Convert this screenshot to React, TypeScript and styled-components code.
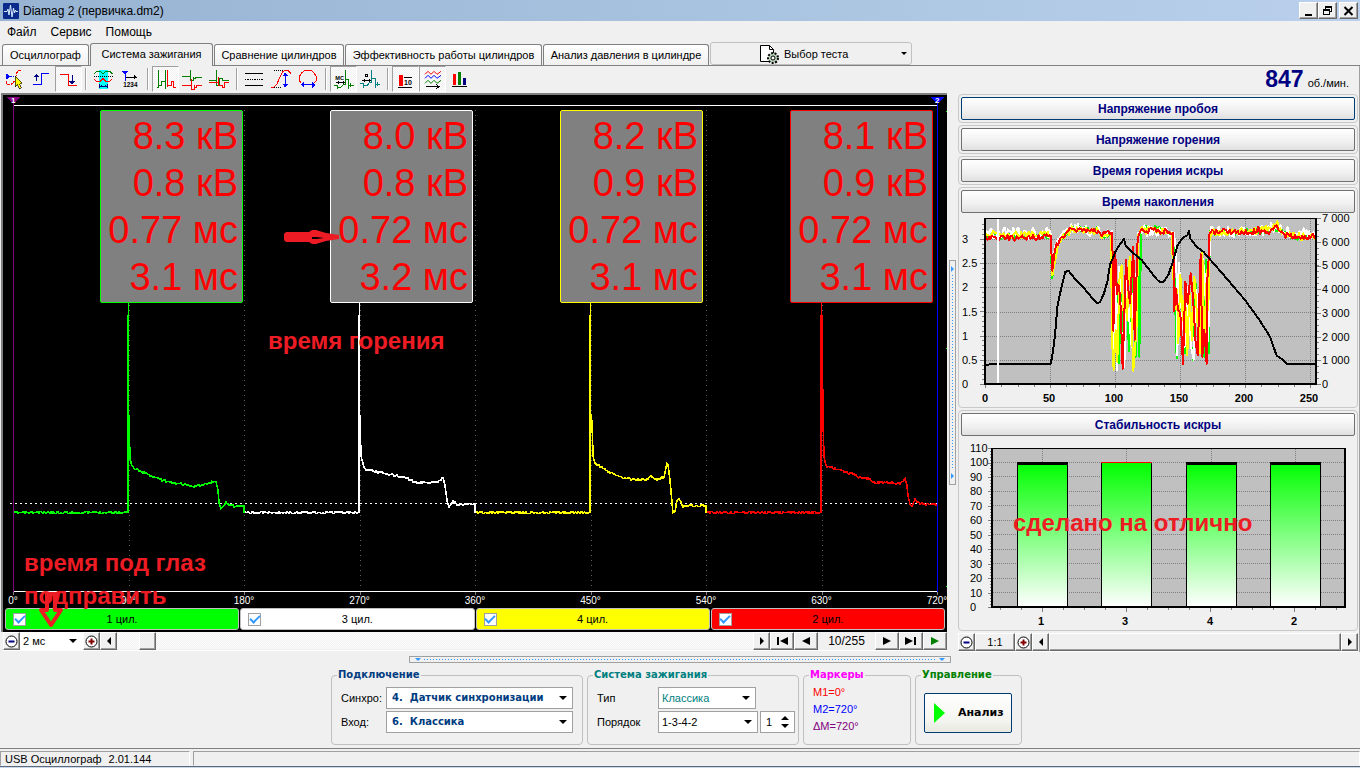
import React from "react";
import styled, { createGlobalStyle, css } from "styled-components";

const GlobalStyle = createGlobalStyle`
  * { box-sizing: border-box; }
  body {
    margin: 0;
    background: #f0f0f0;
    color: #000;
    font: 11px/14px "Liberation Sans", Arial, sans-serif;
  }
  button, select, input {
    font: inherit;
    color: inherit;
    margin: 0;
    padding: 0;
    border-radius: 0;
  }
  svg { display: block; }
`;

const wide = css`
  font-family: "DejaVu Sans", Verdana, sans-serif;
  font-size: 10px;
  font-weight: bold;
`;

/* ---------- window frame ---------- */

const Window = styled.div`
  display: flex;
  flex-direction: column;
  min-height: 100vh;
`;

const TitleBar = styled.header`
  display: flex;
  align-items: center;
  gap: 4px;
  height: 21px;
  padding: 0 2px 0 3px;
  background: linear-gradient(90deg, #97b3d3, #a9c4e0 55%, #bad0ec);
`;

const Title = styled.h1`
  flex: 1;
  margin: 0;
  font-size: 12px;
  font-weight: normal;
`;

const WindowButtons = styled.div`
  display: flex;
`;

const WindowButton = styled.button<{ $apart?: boolean }>`
  display: grid;
  place-items: center;
  width: 19px;
  height: 17px;
  margin-left: ${(p) => (p.$apart ? 2 : 0)}px;
  background: #f0f0f0;
  border: 1px solid;
  border-color: #fff #696969 #696969 #fff;
  box-shadow: inset -1px -1px #a0a0a0;
`;

const MenuBar = styled.nav`
  display: flex;
  gap: 14px;
  height: 21px;
  padding: 0 7px;
  align-items: center;
  font-size: 12px;
`;

const MenuItem = styled.a`
  color: inherit;
  text-decoration: none;
`;

const TabBar = styled.div`
  display: flex;
  align-items: flex-end;
  height: 24px;
  padding-left: 2px;
  border-bottom: 1px solid #808080;
`;

const Tab = styled.button<{ $active?: boolean; $width: number }>`
  width: ${(p) => p.$width}px;
  height: ${(p) => (p.$active ? 23 : 21)}px;
  margin: 0 1px ${(p) => (p.$active ? -1 : 0)}px 0;
  padding-bottom: ${(p) => (p.$active ? 2 : 0)}px;
  border: 1px solid #808080;
  border-bottom: 0;
  border-radius: 3px 3px 0 0;
  background: ${(p) => (p.$active ? "#f0f0f0" : "linear-gradient(#fff, #f0f0f0)")};
  white-space: nowrap;
`;

const TestPicker = styled.button`
  display: flex;
  align-items: center;
  align-self: flex-start;
  gap: 5px;
  width: 202px;
  height: 23px;
  padding: 0 4px 0 48px;
  border: 1px solid #c0c0c0;
  border-radius: 3px;
  background: #f0f0f0;
  text-align: left;
  span { flex: 1; }
`;

const Workspace = styled.main`
  display: grid;
  grid-template-columns: minmax(0, 1fr) 10px 403px;
`;

const ScopeColumn = styled.section`
  display: flex;
  flex-direction: column;
  padding-left: 1px;
`;

/* ---------- toolbar ---------- */

const Toolbar = styled.div`
  display: flex;
  height: 27px;
`;

const ToolButton = styled.button<{ $pressed?: boolean }>`
  display: grid;
  place-items: start;
  width: 27px;
  height: 26px;
  border: 1px solid transparent;
  background: none;
  ${(p) =>
    p.$pressed &&
    css`
      border-color: #a0a0a0 #fff #fff #a0a0a0;
      background: repeating-conic-gradient(#fff 0 25%, #f0f0f0 0 50%) 0 0 / 2px 2px;
    `}
  svg { margin: -1px; }
`;

const ToolDivider = styled.span`
  width: 2px;
  height: 22px;
  margin: 2px 3px;
  border-left: 1px solid #a0a0a0;
  border-right: 1px solid #fff;
`;

/* ---------- oscilloscope ---------- */

const Scope = styled.div`
  position: relative;
  border-left: 2px solid #808080;
  border-top: 2px solid #808080;
  background: #000;
`;

const ScopePlot = styled.svg`
  width: 100%;
  height: 500px;
`;

const Readouts = styled.div`
  position: absolute;
  inset: 15px 14px auto 10px;
  display: grid;
  grid-template-columns: repeat(4, 1fr);
  justify-items: end;
`;

const Readout = styled.div<{ $color: string }>`
  width: 143px;
  padding: 2px 4px 1px;
  border: 1px solid ${(p) => p.$color};
  border-radius: 2px;
  background: #808080;
  color: #f00;
  font-size: 38px;
  line-height: 47px;
  text-align: right;
  white-space: nowrap;
  div { display: flex; justify-content: flex-end; }
`;

const DegreeAxis = styled.div`
  display: flex;
  justify-content: space-between;
  height: 12px;
  padding: 0 10px;
  color: #fff;
  font-size: 10px;
  line-height: 12px;
  span {
    display: flex;
    justify-content: center;
    width: 0;
    white-space: nowrap;
  }
`;

const Cylinders = styled.div`
  display: grid;
  grid-template-columns: repeat(4, 1fr);
  gap: 1px;
  padding: 1px 2px 2px;
`;

const Cylinder = styled.label<{ $color: string }>`
  display: grid;
  grid-template-columns: 14px 1fr 14px;
  align-items: center;
  height: 22px;
  padding: 0 7px;
  border: 1px solid #c0c0c0;
  border-radius: 3px;
  background: ${(p) => p.$color};
  text-align: center;
`;

const Check = styled.input`
  appearance: none;
  display: grid;
  place-items: center;
  width: 13px;
  height: 13px;
  border: 1px solid #a0a0a0;
  background: #fff;
  &:checked::after {
    content: "";
    width: 8px;
    height: 4px;
    margin-bottom: 2px;
    border: solid #3399ff;
    border-width: 0 0 2px 2px;
    transform: rotate(-45deg);
  }
`;

const Note = styled.p<{ $x: number; $y: number }>`
  position: absolute;
  left: ${(p) => p.$x}px;
  top: ${(p) => p.$y}px;
  margin: 0;
  color: #ed1c24;
  font-size: 24px;
  font-weight: bold;
  line-height: 33px;
  white-space: pre-line;
`;

const Mark = styled.svg<{ $x: number; $y: number }>`
  position: absolute;
  left: ${(p) => p.$x}px;
  top: ${(p) => p.$y}px;
`;

/* ---------- scroll and page controls ---------- */

const ControlRow = styled.div<{ $inset?: boolean }>`
  display: flex;
  height: 19px;
  padding-bottom: 1px;
  margin-left: ${(p) => (p.$inset ? 2 : 0)}px;
  border-bottom: 1px solid #fff;
`;

const Key = styled.button<{ $width: number }>`
  display: grid;
  place-items: center;
  flex: none;
  width: ${(p) => p.$width}px;
  height: 18px;
  border: 1px solid;
  border-color: #fff #696969 #696969 #fff;
  box-shadow: inset -1px -1px #a0a0a0;
  background: #f0f0f0;
`;

const Track = styled.div`
  flex: 1;
  padding-left: 22px;
  background: repeating-conic-gradient(#fff 0 25%, #f0f0f0 0 50%) 0 0 / 2px 2px;
`;

const WideThumb = styled(Key)`
  flex: 1;
`;

const PageNumber = styled.output`
  width: 57px;
  line-height: 18px;
  text-align: center;
  font-size: 12px;
`;

/* ---------- splitters ---------- */

const SideSplitter = styled.div`
  display: flex;
  flex-direction: column;
  justify-content: space-between;
  align-items: center;
  align-self: start;
  width: 7px;
  height: 225px;
  margin: 194px 0 0 2px;
  padding: 5px 0;
  border: 1px solid #a0a0a0;
`;

const BottomSplitter = styled.div`
  display: flex;
  align-items: center;
  justify-content: space-between;
  width: 542px;
  height: 7px;
  margin: 4px auto 5px;
  padding: 0 5px;
  border: 1px solid #a0a0a0;
`;

const Dots = styled.span<{ $vertical?: boolean }>`
  flex: 1;
  ${(p) =>
    p.$vertical
      ? css`
          width: 1px;
          margin: 3px 0;
          background: repeating-linear-gradient(#3399ff 0 1px, transparent 1px 3px);
        `
      : css`
          height: 1px;
          margin: 0 3px;
          background: repeating-linear-gradient(90deg, #3399ff 0 1px, transparent 1px 3px);
        `}
`;

/* ---------- right side ---------- */

const SideColumn = styled.aside`
  display: flex;
  flex-direction: column;
  gap: 2px;
  padding: 0 1px;
  border-right: 1px solid #a0a0a0;
`;

const Speed = styled.div`
  display: flex;
  justify-content: flex-end;
  align-items: baseline;
  gap: 4px;
  height: 26px;
  padding-right: 9px;
  line-height: 27px;
  strong {
    color: #000080;
    font-size: 23px;
  }
`;

const Group = styled.section`
  position: relative;
  padding: 2px;
  border: 1px solid #c8c8c8;
  border-radius: 4px;
`;

const GroupButton = styled.button<{ $focused?: boolean }>`
  display: block;
  width: 100%;
  height: 23px;
  border: 1px solid ${(p) => (p.$focused ? "#003c74" : "#707070")};
  border-radius: 2px;
  background: linear-gradient(#fff, #f0f0f0 60%, #e0e0e0);
  color: #000080;
  font-size: 12px;
  font-weight: bold;
`;

const Chart = styled.svg`
  width: 100%;
  font-size: 11px;
`;

/* ---------- bottom panel ---------- */

const SettingsRow = styled.div`
  display: flex;
  justify-content: center;
  align-items: stretch;
  gap: 4px;
  height: 77px;
  margin: 0 7px 3px 0;
`;

const Fieldset = styled.fieldset<{ $color: string; $width: number; $tight?: boolean }>`
  width: ${(p) => p.$width}px;
  margin: 0;
  padding: 5px ${(p) => (p.$tight ? 3 : 9)}px 0 9px;
  border: 1px solid #c0c0c0;
  border-radius: 4px;
  legend {
    ${wide}
    margin-left: -4px;
    padding: 0 1px;
    color: ${(p) => p.$color};
    line-height: 14px;
  }
`;

const Fields = styled.div<{ $label: number }>`
  display: grid;
  grid-template-columns: ${(p) => p.$label}px 1fr;
  row-gap: 2px;
  align-items: center;
`;

const Inline = styled.div`
  display: flex;
  gap: 2px;
`;

const SelectBox = styled.div<{ $width?: number; $plain?: boolean }>`
  position: relative;
  width: ${(p) => (p.$width ? `${p.$width}px` : "100%")};
  svg {
    position: absolute;
    right: 6px;
    top: calc(50% - 2px);
    pointer-events: none;
  }
  select {
    appearance: none;
    display: block;
    width: 100%;
    height: ${(p) => (p.$plain ? 18 : 22)}px;
    padding: 0 3px;
    border: ${(p) => (p.$plain ? 0 : 1)}px solid #a0a0a0;
    background: #fff;
  }
`;

const BoldSelect = styled.select`
  ${wide}
  color: #003c80;
  && { padding-left: 5px; }
`;

const TealSelect = styled.select`
  color: #008080;
`;

const Spinner = styled.div`
  display: flex;
  align-items: center;
  width: 35px;
  height: 22px;
  padding: 0 5px;
  border: 1px solid #a0a0a0;
  background: #fff;
  input {
    flex: 1;
    width: 0;
    min-width: 0;
    border: 0;
    background: none;
  }
`;

const SpinKeys = styled.div`
  display: grid;
  gap: 4px;
  button {
    border: 0;
    background: none;
    line-height: 0;
  }
`;

const Markers = styled.div`
  margin-top: -3px;
  line-height: 17px;
`;

const Marker = styled.div<{ $color: string }>`
  color: ${(p) => p.$color};
`;

const RunButton = styled.button`
  ${wide}
  display: flex;
  align-items: center;
  gap: 13px;
  width: 88px;
  height: 40px;
  margin: 6px 0 0 -1px;
  padding-left: 9px;
  border: 1px solid #003c74;
  border-radius: 2px;
  background: linear-gradient(#fff, #f4f4f0 70%, #e8e8e0);
  font-size: 11px;
`;

const StatusBar = styled.footer`
  display: flex;
  gap: 3px;
  padding-top: 2px;
  margin-top: auto;
  border-top: 1px solid #808080;
  border-bottom: 1px solid #5a6a80;
`;

const StatusCell = styled.div<{ $grow?: boolean }>`
  display: flex;
  gap: 7px;
  flex: ${(p) => (p.$grow ? "1" : "0 0 190px")};
  height: 15px;
  padding-left: 4px;
  border: 1px solid;
  border-color: #a0a0a0 #fff transparent #a0a0a0;
`;

const BottomEdge = styled.div`
  height: 1px;
  background: #cbd7e6;
`;

/* ---------- glyphs ---------- */

const Arrow = ({ dir, color = "#000", size = 4 }: { dir: "up" | "down" | "left" | "right"; color?: string; size?: number }) => {
  const s = size;
  const shapes = {
    up: `0,${s} ${2 * s},${s} ${s},0`,
    down: `0,0 ${2 * s},0 ${s},${s}`,
    left: `${s},0 ${s},${2 * s} 0,${s}`,
    right: `0,0 0,${2 * s} ${s},${s}`,
  };
  const flat = dir === "up" || dir === "down";
  return (
    <svg width={flat ? 2 * s : s} height={flat ? s : 2 * s} aria-hidden="true">
      <polygon points={shapes[dir]} fill={color} />
    </svg>
  );
};

const PageGlyph = ({ dir, end, color = "#000" }: { dir: 1 | -1; end?: boolean; color?: string }) => (
  <svg width="12" height="8" viewBox="0 0 12 8" aria-hidden="true">
    <g transform={dir < 0 ? "translate(12 0) scale(-1 1)" : undefined} fill={color}>
      <polygon points={end ? "0,0 8,4 0,8" : "2,0 10,4 2,8"} />
      {end && <rect x="9" width="2" height="8" />}
    </g>
  </svg>
);

const ZoomGlyph = ({ plus }: { plus?: boolean }) => (
  <svg width="13" height="13" viewBox="0 0 13 13" aria-hidden="true">
    <circle cx="6.5" cy="6.5" r="5.5" fill="#fff" stroke="#000" />
    <path d={plus ? "M3.5 6.5h6M6.5 3.5v6" : "M3.5 6.5h6"} stroke={plus ? "#800000" : "#000080"} strokeWidth="2" />
  </svg>
);

const toolGroups: { name: string; x: number; pressed?: boolean; art: React.ReactNode }[][] = [
  [
    {
      name: "Уровень",
      x: 3,
      art: (
        <>
          <polygon points="18,220 33,229.500 18,239" fill="#00f" stroke="none" />
          <path d="M33 230H52" stroke="#00f" strokeDasharray="3 3" />
          <path d="M63 211H57L51 217 48 227 45 237M18 242V248L24 254H33L39 248 43 243" stroke="red" strokeDasharray="9 2" />
          <polygon points="46,229 46,260 53,254 58,267 64,264 59,252 67,250" fill="#ff0" stroke="#000" strokeWidth="2" />
        </>
      ),
    },
    { name: "Фронт", x: 84, art: <><path d="M99 254H123V220H147" stroke="#00f" /><path d="M109 244V228" stroke="#000080" /><polygon points="100,232 109,221 118,232" fill="#000080" /></> },
    { name: "Спад", x: 165, pressed: true, art: <><path d="M180 224H206V257H232" stroke="red" /><path d="M216 225V246" stroke="#000080" /><polygon points="207,243 216,253 225,243" fill="#000080" /></> },
  ],
  [
    {
      name: "Окно",
      x: 270,
      art: (
        <>
          <rect x="296" y="210" width="28" height="57" fill="#0ff" />
          <path d="M282 222L290 213H300L309 221 318 213H328L337 222" stroke="green" />
          <path d="M281 230H338" stroke="#000" strokeDasharray="3 3" />
          <path d="M282 237L290 244H300L309 236 318 244H328L337 237" stroke="red" />
          <path d="M299 252V265M321 252V265M299 259H321M303 255V262M317 255V262" stroke="#000080" />
        </>
      ),
    },
    {
      name: "Порядок цилиндров",
      x: 351,
      art: (
        <>
          <polygon points="366,213 386,213 376,224" fill="#00f" />
          <path d="M376 222V242" stroke="#00f" />
          <path d="M378 232H408" stroke="#000" />
          <polygon points="402,225 411,232 402,239" fill="#000" />
          <text x="370" y="262" fontSize="19" fontWeight="bold" fill="#000">1234</text>
        </>
      ),
    },
  ],
  [
    { name: "Последовательно", x: 456, pressed: true, art: <><path d="M470 262H475V211M475 256H484V244H497M497 211V268" stroke="green" /><path d="M503 211V262M503 256H513V244H520V262H527" stroke="red" /></> },
    { name: "Друг под другом", x: 537, art: <><path d="M546 229H570V209V240H579V231M579 235H587V231H606" stroke="green" /><path d="M546 256H573V238V267H582V256M582 262H588V256H606" stroke="red" /></> },
    { name: "Наложение", x: 618, art: <><path d="M627 242H650V209V256H659V236H668V242H687" stroke="green" /><path d="M627 248H654V232V256H668V262H674V248H686" stroke="red" /></> },
  ],
  [
    { name: "Линии", x: 723, art: <><path d="M735 220H789M735 256H789" stroke="#000" /><path d="M735 238H789" stroke="#000" strokeDasharray="4 3" /></> },
    {
      name: "Высота",
      x: 804,
      art: (
        <>
          <path d="M822 211H850M822 263H847" stroke="#000" strokeDasharray="3 3" />
          <path d="M813 261H822L831 252 840 230 849 214 855 211H864L873 220" stroke="red" />
          <path d="M856 222V256" stroke="#00f" />
          <polygon points="847,228 856,217 865,228" fill="#00f" />
          <polygon points="847,252 856,263 865,252" fill="#00f" />
        </>
      ),
    },
    {
      name: "Ширина",
      x: 885,
      art: (
        <>
          <path d="M904 248L898 242V230L904 220 913 212H934L943 220 949 230V242L943 248" stroke="red" />
          <path d="M908 254H940" stroke="#00f" />
          <polygon points="913,244 902,254 913,264" fill="#00f" />
          <polygon points="936,244 947,254 936,264" fill="#00f" />
        </>
      ),
    },
  ],
  [
    {
      name: "Миллисекунды",
      x: 990,
      pressed: true,
      art: (
        <>
          <text x="1006" y="241" fontSize="17" fontWeight="bold" fill="#000">МС</text>
          <path d="M1009 247H1034M1014 243V251M1029 243V251" stroke="#000" />
          <path d="M1003 256H1012V267M1012 262H1022L1030 254H1037V211M1037 238H1046V268M1046 256H1061M1052 250V262" stroke="green" />
        </>
      ),
    },
    {
      name: "Градусы",
      x: 1071,
      art: (
        <>
          <circle cx="1100" cy="227" r="4" stroke="#000" />
          <path d="M1087 241H1112M1092 237V245M1107 237V245" stroke="#000" />
          <path d="M1081 250H1090V264M1090 256H1102L1108 248H1115V211M1115 235H1125V265M1125 253H1139M1131 247V259" stroke="#008080" />
        </>
      ),
    },
  ],
  [
    { name: "Значения", x: 1176, pressed: true, art: <><rect x="1197" y="224" width="13" height="35" fill="red" /><path d="M1194 262H1237M1213 232H1235" stroke="#000" /><text x="1212" y="256" fontSize="21" fontWeight="bold" fill="#000">10</text></> },
    {
      name: "История",
      x: 1257,
      pressed: true,
      art: (
        <>
          <g strokeWidth="3" shapeRendering="auto">
            <path d="M1275 223L1284 214 1293 223 1302 214 1311 223 1323 214" stroke="red" />
            <path d="M1275 235L1284 226 1293 235 1302 226 1311 235 1323 226" stroke="#00f" />
            <path d="M1275 250L1284 241 1293 250 1302 241 1311 250 1323 241" stroke="green" />
          </g>
          <path d="M1278 260H1317M1309 254L1317 260 1309 266" stroke="#000" />
        </>
      ),
    },
    { name: "Гистограмма", x: 1338, art: <><rect x="1359" y="221" width="10" height="35" fill="red" /><rect x="1374" y="215" width="10" height="41" fill="green" /><rect x="1389" y="234" width="10" height="22" fill="#000080" /><path d="M1356 258H1401" stroke="#000" /></> },
  ],
];

/* ---------- signal data ---------- */

type Pt = [number, number];

const makeNoise = (seed: number) => {
  let s = seed;
  return () => {
    s = (s * 16807) % 2147483647;
    return s / 2147483647 - 0.5;
  };
};

/* Walks the polyline pixel by pixel and adds measurement noise. */
const trace = (pts: Pt[], amp: number, seed: number, step = 1) => {
  const noise = makeNoise(seed);
  const out: string[] = [];
  for (let i = 0; i < pts.length - 1; i++) {
    const [x0, y0] = pts[i];
    const [x1, y1] = pts[i + 1];
    const n = Math.max(1, Math.floor((x1 - x0) / step));
    for (let k = 0; k < n; k++) {
      const x = x0 + ((x1 - x0) * k) / n;
      const y = y0 + ((y1 - y0) * k) / n + (n > 2 ? noise() * amp : 0);
      out.push(`${x.toFixed(1)},${y.toFixed(1)}`);
    }
  }
  out.push(pts[pts.length - 1].join(","));
  return out.join(" ");
};

const cylinders = [
  {
    name: "1 цил.",
    color: "#00ff00",
    values: ["8.3 кВ", "0.8 кВ", "0.77 мс", "3.1 мс"],
    spark: 128,
    base: [[14, 512], [127, 512]] as Pt[],
    burn: [[128, 400], [129, 420], [130, 458], [132, 466], [135, 469], [142, 471], [150, 475], [160, 479], [172, 482], [185, 484], [194, 486], [205, 484], [214, 481], [216, 481], [218, 490], [219, 502], [221, 508], [223, 506], [226, 501], [229, 504], [235, 506], [244, 505], [244, 512]] as Pt[],
  },
  {
    name: "3 цил.",
    color: "#ffffff",
    values: ["8.0 кВ", "0.8 кВ", "0.72 мс", "3.2 мс"],
    spark: 359,
    base: [[245, 512], [358, 512]] as Pt[],
    burn: [[359, 400], [360, 420], [361, 455], [363, 464], [366, 469], [375, 471], [390, 474], [406, 477], [415, 482], [425, 482], [435, 482], [440, 480], [443, 477], [445, 485], [447, 500], [449, 506], [453, 501], [458, 504], [465, 504], [475, 504], [475, 512]] as Pt[],
  },
  {
    name: "4 цил.",
    color: "#ffff00",
    values: ["8.2 кВ", "0.9 кВ", "0.72 мс", "3.1 мс"],
    spark: 590,
    base: [[476, 512], [589, 512]] as Pt[],
    burn: [[590, 410], [592, 421], [593, 455], [594, 461], [600, 466], [610, 472], [622, 477], [635, 479], [648, 479], [651, 476], [656, 479], [664, 477], [667, 463], [668, 464], [670, 480], [672, 502], [673, 512], [675, 511], [677, 500], [679, 498], [683, 506], [690, 505], [706, 505], [706, 512]] as Pt[],
  },
  {
    name: "2 цил.",
    color: "#ff0000",
    values: ["8.1 кВ", "0.9 кВ", "0.72 мс", "3.1 мс"],
    spark: 821,
    base: [[707, 512], [820, 512]] as Pt[],
    burn: [[822, 315], [823, 420], [824, 456], [826, 466], [832, 467], [842, 470], [850, 473], [856, 474], [857, 477], [870, 478], [872, 482], [885, 482], [900, 483], [903, 481], [905, 478], [907, 485], [908, 495], [910, 504], [912, 506], [915, 499], [920, 503], [930, 504], [937, 504]] as Pt[],
  },
];

const lower = (pts: Pt[]) => pts.map(([x, y]) => [x, y + 0.5] as Pt);

const degrees = [0, 90, 180, 270, 360, 450, 540, 630, 720];

/* Accumulation time history: chart units are thirds of a pixel. */
const history = [
  {
    color: "#00ff00",
    seed: 71,
    amp: 18,
    pts: [[90, 78], [287, 78], [291, 206], [300, 150], [310, 92], [350, 54], [430, 60], [440, 78], [470, 70], [474, 300], [480, 170], [488, 250], [492, 460], [498, 240], [505, 430], [512, 180], [522, 425], [528, 290], [536, 160], [542, 440], [550, 75], [553, 440], [558, 80], [561, 54], [600, 54], [655, 70], [665, 445], [672, 190], [684, 300], [690, 430], [700, 240], [708, 400], [715, 450], [722, 220], [732, 410], [740, 180], [748, 440], [754, 150], [762, 430], [764, 70], [900, 64], [960, 56], [985, 72], [1020, 80], [1083, 82]] as Pt[],
  },
  {
    color: "#ffffff",
    seed: 19,
    amp: 34,
    pts: [[90, 70], [287, 70], [291, 170], [305, 100], [345, 58], [430, 64], [470, 62], [476, 420], [481, 180], [486, 480], [493, 170], [500, 380], [508, 470], [515, 200], [523, 330], [530, 410], [538, 180], [546, 300], [549, 70], [560, 60], [650, 66], [657, 70], [664, 135], [667, 435], [672, 160], [680, 300], [690, 410], [700, 230], [708, 410], [716, 450], [724, 240], [734, 430], [742, 140], [750, 200], [756, 420], [762, 330], [764, 66], [900, 66], [960, 52], [985, 66], [1083, 70]] as Pt[],
  },
  {
    color: "#ffff00",
    seed: 43,
    amp: 22,
    pts: [[90, 74], [287, 76], [292, 196], [303, 140], [312, 90], [350, 58], [430, 62], [440, 80], [468, 70], [471, 390], [476, 480], [482, 360], [487, 455], [493, 210], [500, 165], [504, 300], [510, 240], [516, 330], [524, 140], [530, 340], [535, 482], [540, 420], [546, 330], [549, 75], [560, 60], [650, 68], [659, 300], [666, 240], [670, 400], [676, 195], [684, 330], [690, 250], [697, 435], [703, 240], [711, 390], [718, 200], [727, 330], [734, 430], [742, 122], [748, 400], [756, 180], [760, 300], [764, 68], [900, 64], [960, 52], [967, 34], [972, 64], [1020, 78], [1083, 82]] as Pt[],
  },
  {
    color: "#ff0000",
    seed: 5,
    amp: 18,
    pts: [[90, 84], [210, 84], [287, 78], [292, 182], [299, 125], [305, 105], [325, 78], [345, 56], [430, 62], [436, 78], [455, 68], [472, 68], [475, 362], [481, 135], [486, 252], [491, 225], [496, 268], [503, 476], [513, 150], [519, 230], [525, 280], [535, 110], [539, 390], [548, 85], [553, 62], [600, 62], [655, 68], [657, 305], [663, 235], [669, 300], [676, 310], [684, 463], [691, 215], [698, 282], [707, 190], [714, 260], [722, 400], [728, 436], [737, 132], [742, 440], [748, 360], [755, 462], [757, 210], [762, 130], [763, 68], [800, 66], [860, 64], [905, 66], [910, 50], [915, 66], [950, 62], [965, 46], [975, 72], [1020, 82], [1083, 80]] as Pt[],
  },
];

const rpmPts: Pt[] = [[90, 464], [140, 462], [287, 462], [293, 430], [300, 375], [307, 290], [320, 228], [331, 186], [340, 182], [347, 190], [365, 213], [385, 232], [410, 262], [425, 279], [435, 277], [447, 250], [457, 215], [465, 165], [480, 128], [490, 110], [507, 87], [512, 108], [530, 125], [560, 150], [605, 208], [615, 216], [625, 216], [640, 195], [652, 160], [668, 105], [685, 82], [697, 76], [702, 63], [706, 86], [725, 110], [745, 125], [800, 188], [870, 270], [910, 325], [945, 380], [965, 437], [980, 447], [995, 462], [1082, 462]];

const range = (n: number) => Array.from({ length: n }, (_, i) => i);

const HistoryChart = () => (
  <Chart viewBox="961 213 394 192" role="img" aria-label="Время накопления">
    <rect x="985" y="219" width="331" height="165" fill="#c0c0c0" />
    <g stroke="#808080" shapeRendering="crispEdges">
      <g strokeDasharray="1 1">
        {range(6).map((i) => <path key={i} d={`M986 ${Math.round(360 - i * 24.2) + 0.5}H1315`} />)}
        {range(5).map((i) => <path key={i} d={`M${1050.5 + i * 65} 219V383`} />)}
      </g>
      {range(7).map((i) => <path key={i} d={`M980 ${Math.round(384 - i * 24.2) + 0.5}H985`} />)}
      {range(34).map((i) => <path key={i} d={`M982 ${Math.round(384 - i * 4.84) + 0.5}H985`} />)}
      {range(8).map((i) => <path key={i} d={`M1317 ${Math.round(384 - i * 23.7) + 0.5}H1321`} />)}
      {range(28).map((i) => <path key={i} d={`M1317 ${Math.round(384 - i * 5.93) + 0.5}H1319`} />)}
      {range(6).map((i) => <path key={i} d={`M${985.5 + i * 65} 385V388`} />)}
      {range(21).map((i) => <path key={i} d={`M${Math.round(985 + i * 16.25) + 0.5} 385V387`} />)}
    </g>
    <g transform="translate(955 210) scale(0.33333)" fill="none" strokeLinejoin="round" shapeRendering="crispEdges">
      {history.map((h) => (
        <polyline key={h.color} points={trace(h.pts, h.amp, h.seed, 4)} stroke={h.color} strokeWidth="6" />
      ))}
      <polyline points={rpmPts.map((p) => p.join(",")).join(" ")} stroke="#000" strokeWidth="6" />
    </g>
    <g shapeRendering="crispEdges" fill="none" stroke="#000">
      <path d="M998 219V384" stroke="#fff" strokeWidth="2" />
      <path d="M984 218.500H1317" />
      <path d="M985 218V384M984 384H1317M1316 218V385" strokeWidth="2" />
    </g>
    {["3", "2.5", "2", "1.5", "1", "0.5", "0"].map((t, i) => (
      <text key={t} x="962" y={243 + Math.round(i * 24.2)}>{t}</text>
    ))}
    {["7 000", "6 000", "5 000", "4 000", "3 000", "2 000", "1 000", "0"].map((t, i) => (
      <text key={t} x="1322" y={222 + Math.round(i * 23.7)}>{t}</text>
    ))}
    <g fontWeight="bold" textAnchor="middle">
      {range(6).map((i) => <text key={i} x={985 + i * 65 - (i ? 1 : 0)} y="402">{i * 50}</text>)}
    </g>
  </Chart>
);

const bars = [
  { label: "1", x: 1017 },
  { label: "3", x: 1101, best: true },
  { label: "4", x: 1186 },
  { label: "2", x: 1270 },
];

const StabilityChart = () => (
  <Chart viewBox="961 436 394 192" role="img" aria-label="Стабильность искры">
    <defs>
      <linearGradient id="bar" x1="0" y1="0" x2="0" y2="1">
        <stop offset="0" stopColor="#00ff00" />
        <stop offset="1" stopColor="#ffffff" />
      </linearGradient>
    </defs>
    <rect x="992" y="448" width="353" height="159" fill="#c0c0c0" />
    <g stroke="#808080" shapeRendering="crispEdges">
      <g strokeDasharray="1 1">
        {range(10).map((i) => <path key={i} d={`M993 ${Math.round(592 - i * 14.45) + 0.5}H1344`} />)}
        {bars.map((b) => <path key={b.label} d={`M${b.x + 25.5} 449V462`} />)}
      </g>
      {range(12).map((i) => <path key={i} d={`M988 ${Math.round(607 - i * 14.45) + 0.5}H992`} />)}
      {range(55).map((i) => <path key={i} d={`M990 ${Math.round(607 - i * 2.89) + 0.5}H992`} />)}
      {range(17).map((i) => <path key={i} d={`M${1000.5 + i * 21} 608V${i % 4 === 2 ? 612 : 610}`} />)}
    </g>
    <g shapeRendering="crispEdges">
      {bars.map((b) => (
        <React.Fragment key={b.label}>
          <rect x={b.x + 0.5} y="462.500" width="50" height="144" fill="url(#bar)" stroke="#000" />
          {b.best ? <rect x={b.x} y="462" width="51" height="1" fill="red" /> : <rect x={b.x} y="462" width="51" height="3" />}
        </React.Fragment>
      ))}
      <path d="M991 448.500H1346" stroke="#000" />
      <path d="M992 448V608M991 607H1346M1345 448V608" stroke="#000" strokeWidth="2" />
    </g>
    {range(12).map((i) => (
      <text key={i} x="970" y={452 + Math.round(i * 14.45)}>{110 - i * 10}</text>
    ))}
    <g fontWeight="bold" textAnchor="middle">
      {bars.map((b) => <text key={b.label} x={b.x + 24} y="625">{b.label}</text>)}
    </g>
  </Chart>
);

const DropArrow = () => <Arrow dir="down" size={4} />;

export default function App() {
  return (
    <Window>
      <GlobalStyle />
      <TitleBar>
        <svg width="16" height="16" viewBox="0 0 16 16" aria-hidden="true">
          <rect width="16" height="16" rx="1" fill="#0a2a8c" />
          <path d="M1 8.500H4L5 6 6 12 7.500 2 9 14 10.500 5 11.500 10 12.500 7 13 8.500H15" fill="none" stroke="#d8ecff" />
        </svg>
        <Title>Diamag 2 (первичка.dm2)</Title>
        <WindowButtons>
          <WindowButton aria-label="Свернуть">
            <svg width="11" height="11"><rect x="2" y="9" width="7" height="2" /></svg>
          </WindowButton>
          <WindowButton aria-label="Восстановить">
            <svg width="11" height="11" fill="none" stroke="#000" shapeRendering="crispEdges">
              <path d="M3.500 4V1.500H9.500V6.500H7M3 2H10M1.500 4.500H7.500V9.500H1.500ZM1 5.500H8" />
            </svg>
          </WindowButton>
          <WindowButton $apart aria-label="Закрыть">
            <svg width="11" height="11"><path d="M1.500 2L9.500 10M9.500 2L1.500 10" stroke="#000" strokeWidth="2" /></svg>
          </WindowButton>
        </WindowButtons>
      </TitleBar>

      <MenuBar>
        <MenuItem href="#file">Файл</MenuItem>
        <MenuItem href="#service">Сервис</MenuItem>
        <MenuItem href="#help">Помощь</MenuItem>
      </MenuBar>

      <TabBar>
        <Tab $width={87}>Осциллограф</Tab>
        <Tab $active $width={123}>Система зажигания</Tab>
        <Tab $width={130}>Сравнение цилиндров</Tab>
        <Tab $width={197}>Эффективность работы цилиндров</Tab>
        <Tab $width={166}>Анализ давления в цилиндре</Tab>
        <TestPicker>
          <svg width="20" height="20" viewBox="0 0 20 20" aria-hidden="true">
            <path d="M1.500 1.500H10.500L14.500 5.500V17.500H1.500Z" fill="#fff" stroke="#000" />
            <path d="M10.500 1.500V5.500H14.500" fill="none" stroke="#000" />
            <circle cx="14" cy="14" r="5" fill="#b8d0b8" stroke="#000" strokeWidth="2" strokeDasharray="2 1.500" />
            <circle cx="14" cy="14" r="2" fill="#fff" stroke="#000" />
          </svg>
          <span>Выбор теста</span>
          <Arrow dir="down" size={3} />
        </TestPicker>
      </TabBar>

      <Workspace>
        <ScopeColumn>
          <Toolbar>
            {toolGroups.map((group, g) => (
              <React.Fragment key={g}>
                {g > 0 && <ToolDivider />}
                {group.map((tool) => (
                  <ToolButton key={tool.name} $pressed={tool.pressed} aria-label={tool.name} aria-pressed={!!tool.pressed}>
                    <svg width="27" height="25" viewBox={`${tool.x} 198 81 75`} fill="none" strokeWidth="3" shapeRendering="crispEdges">
                      {tool.art}
                    </svg>
                  </ToolButton>
                ))}
              </React.Fragment>
            ))}
          </Toolbar>

          <Scope>
            <ScopePlot viewBox="3 95 944 500" preserveAspectRatio="none" role="img" aria-label="Осциллограмма" fill="none" shapeRendering="crispEdges">
              <path d="M13 105.500H937M13 591.500H937" stroke="#fff" />
              {range(7).map((i) => (
                <path key={i} d={`M${Math.round(128.7 + i * 115.5) + 0.5} 110V590`} stroke="#606060" strokeDasharray="1 4" />
              ))}
              {range(9).map((i) => <path key={i} d={`M${Math.round(13.200 + i * 115.500) + 0.5} 592V595`} stroke="#808080" />)}
              <path d="M10 503.500H937" stroke="#fff" strokeDasharray="2 3" />
              {cylinders.map((c, i) => (
                <g key={c.name} stroke={c.color} strokeWidth="1.600">
                  <polyline points={trace(lower(c.base), 2.2, 11 + i * 7)} />
                  <polyline points={trace(lower(c.burn), 2, 23 + i * 7)} />
                  <path d={`M${c.spark + 0.5} 300V316`} strokeWidth="1" />
                  <path d={`M${c.spark} 315V513`} strokeWidth="2" />
                </g>
              ))}
              <path d="M13.500 98V592" stroke="#800080" />
              <path d="M937.500 98V592" stroke="#00f" />
              <polygon points="6,97 21,97 13.500,104" fill="#800080" />
              <polygon points="930,97 945,97 937.500,104" fill="#00f" />
              <text x="11" y="103" fontSize="8" fontWeight="bold" fill="#fff">1</text>
              <text x="935" y="103" fontSize="8" fontWeight="bold" fill="#fff">2</text>
              <path d="M946 111.500H948M946 348.500H948M946 586.500H948" stroke="#0f0" />
            </ScopePlot>
            <Readouts>
              {cylinders.map((c) => (
                <Readout key={c.name} $color={c.color}>
                  {c.values.map((v) => <div key={v}>{v}</div>)}
                </Readout>
              ))}
            </Readouts>
            <DegreeAxis>
              {degrees.map((d) => <span key={d}>{d}°</span>)}
            </DegreeAxis>
            <Cylinders>
              {cylinders.map((c) => (
                <Cylinder key={c.name} $color={c.color}>
                  <Check type="checkbox" defaultChecked />
                  {c.name}
                </Cylinder>
              ))}
            </Cylinders>
            <Mark $x={281} $y={134} width="56" height="17" viewBox="0 0 56 17" aria-hidden="true">
              <path d="M2 3H25L28 1H32L42 4 55 6V10L42 12 32 15H28L25 13H2L0 11V5Z" fill="#ed1c24" />
              <path d="M28 8H33L40 9 33 10H28Z" fill="#000" />
            </Mark>
            <Note $x={265} $y={229}>время горения</Note>
            <Note $x={21} $y={451}>{"время под глаз\nподправить"}</Note>
            <Mark $x={34} $y={497} width="27" height="37" viewBox="0 0 27 37" aria-hidden="true">
              <path d="M10 1V18H4L14 33 24 18H18V1M8 2H20" fill="none" stroke="#ed1c24" strokeWidth="4" strokeLinejoin="round" />
            </Mark>
          </Scope>

          <ControlRow $inset>
            <Key $width={17} aria-label="Уменьшить"><ZoomGlyph /></Key>
            <SelectBox $plain $width={63}>
              <select aria-label="Развёртка"><option>2 мс</option></select>
              <DropArrow />
            </SelectBox>
            <Key $width={17} aria-label="Увеличить"><ZoomGlyph plus /></Key>
            <Key $width={17} aria-label="Влево"><Arrow dir="left" /></Key>
            <Track><Key $width={17} aria-label="Ползунок" /></Track>
            <Key $width={17} aria-label="Вправо"><Arrow dir="right" /></Key>
            <Key $width={24} aria-label="Первый"><PageGlyph dir={-1} end /></Key>
            <Key $width={24} aria-label="Предыдущий"><PageGlyph dir={-1} /></Key>
            <PageNumber>10/255</PageNumber>
            <Key $width={24} aria-label="Следующий"><PageGlyph dir={1} /></Key>
            <Key $width={24} aria-label="Последний"><PageGlyph dir={1} end /></Key>
            <Key $width={24} aria-label="Воспроизвести"><PageGlyph dir={1} color="#008000" /></Key>
          </ControlRow>
        </ScopeColumn>

        <SideSplitter>
          <Arrow dir="right" color="#3399ff" size={3} />
          <Dots $vertical />
          <Arrow dir="right" color="#3399ff" size={3} />
        </SideSplitter>

        <SideColumn>
          <Speed><strong>847</strong> об./мин.</Speed>
          <Group><GroupButton $focused>Напряжение пробоя</GroupButton></Group>
          <Group><GroupButton>Напряжение горения</GroupButton></Group>
          <Group><GroupButton>Время горения искры</GroupButton></Group>
          <Group>
            <GroupButton>Время накопления</GroupButton>
            <HistoryChart />
          </Group>
          <Group>
            <GroupButton>Стабильность искры</GroupButton>
            <StabilityChart />
            <Note $x={54} $y={95}>сделано на отлично</Note>
          </Group>
          <ControlRow>
            <Key $width={17} aria-label="Уменьшить масштаб"><ZoomGlyph /></Key>
            <Key $width={40}>1:1</Key>
            <Key $width={17} aria-label="Увеличить масштаб"><ZoomGlyph plus /></Key>
            <Key $width={17} aria-label="Назад"><Arrow dir="left" /></Key>
            <WideThumb $width={290} aria-label="Полоса прокрутки" />
            <Key $width={17} aria-label="Вперёд"><Arrow dir="right" /></Key>
          </ControlRow>
        </SideColumn>
      </Workspace>

      <BottomSplitter>
        <Arrow dir="down" color="#3399ff" size={3} />
        <Dots />
        <Arrow dir="down" color="#3399ff" size={3} />
      </BottomSplitter>

      <SettingsRow>
        <Fieldset $color="#003c80" $width={252}>
          <legend>Подключение</legend>
          <Fields $label={45}>
            <label htmlFor="sync">Синхро:</label>
            <SelectBox>
              <BoldSelect id="sync"><option>4.&nbsp; Датчик синхронизации</option></BoldSelect>
              <DropArrow />
            </SelectBox>
            <label htmlFor="input">Вход:</label>
            <SelectBox>
              <BoldSelect id="input"><option>6.&nbsp; Классика</option></BoldSelect>
              <DropArrow />
            </SelectBox>
          </Fields>
        </Fieldset>
        <Fieldset $color="#008080" $width={212} $tight>
          <legend>Система зажигания</legend>
          <Fields $label={61}>
            <label htmlFor="kind">Тип</label>
            <SelectBox $width={98}>
              <TealSelect id="kind"><option>Классика</option></TealSelect>
              <DropArrow />
            </SelectBox>
            <label htmlFor="order">Порядок</label>
            <Inline>
              <SelectBox $width={100}>
                <select id="order"><option>1-3-4-2</option></select>
                <DropArrow />
              </SelectBox>
              <Spinner>
                <input aria-label="Первый цилиндр" defaultValue="1" />
                <SpinKeys>
                  <button aria-label="Больше"><Arrow dir="up" /></button>
                  <button aria-label="Меньше"><Arrow dir="down" /></button>
                </SpinKeys>
              </Spinner>
            </Inline>
          </Fields>
        </Fieldset>
        <Fieldset $color="#ff00ff" $width={108}>
          <legend>Маркеры</legend>
          <Markers>
            <Marker $color="#ff0000">М1=0°</Marker>
            <Marker $color="#0000ff">М2=720°</Marker>
            <Marker $color="#800080">ΔМ=720°</Marker>
          </Markers>
        </Fieldset>
        <Fieldset $color="#008000" $width={105}>
          <legend>Управление</legend>
          <RunButton>
            <svg width="11" height="20" aria-hidden="true"><polygon points="0,0 11,10 0,20" fill="#00ff00" /></svg>
            Анализ
          </RunButton>
        </Fieldset>
      </SettingsRow>

      <StatusBar>
        <StatusCell><span>USB Осциллограф</span><span>2.01.144</span></StatusCell>
        <StatusCell $grow />
      </StatusBar>
      <BottomEdge />
    </Window>
  );
}
